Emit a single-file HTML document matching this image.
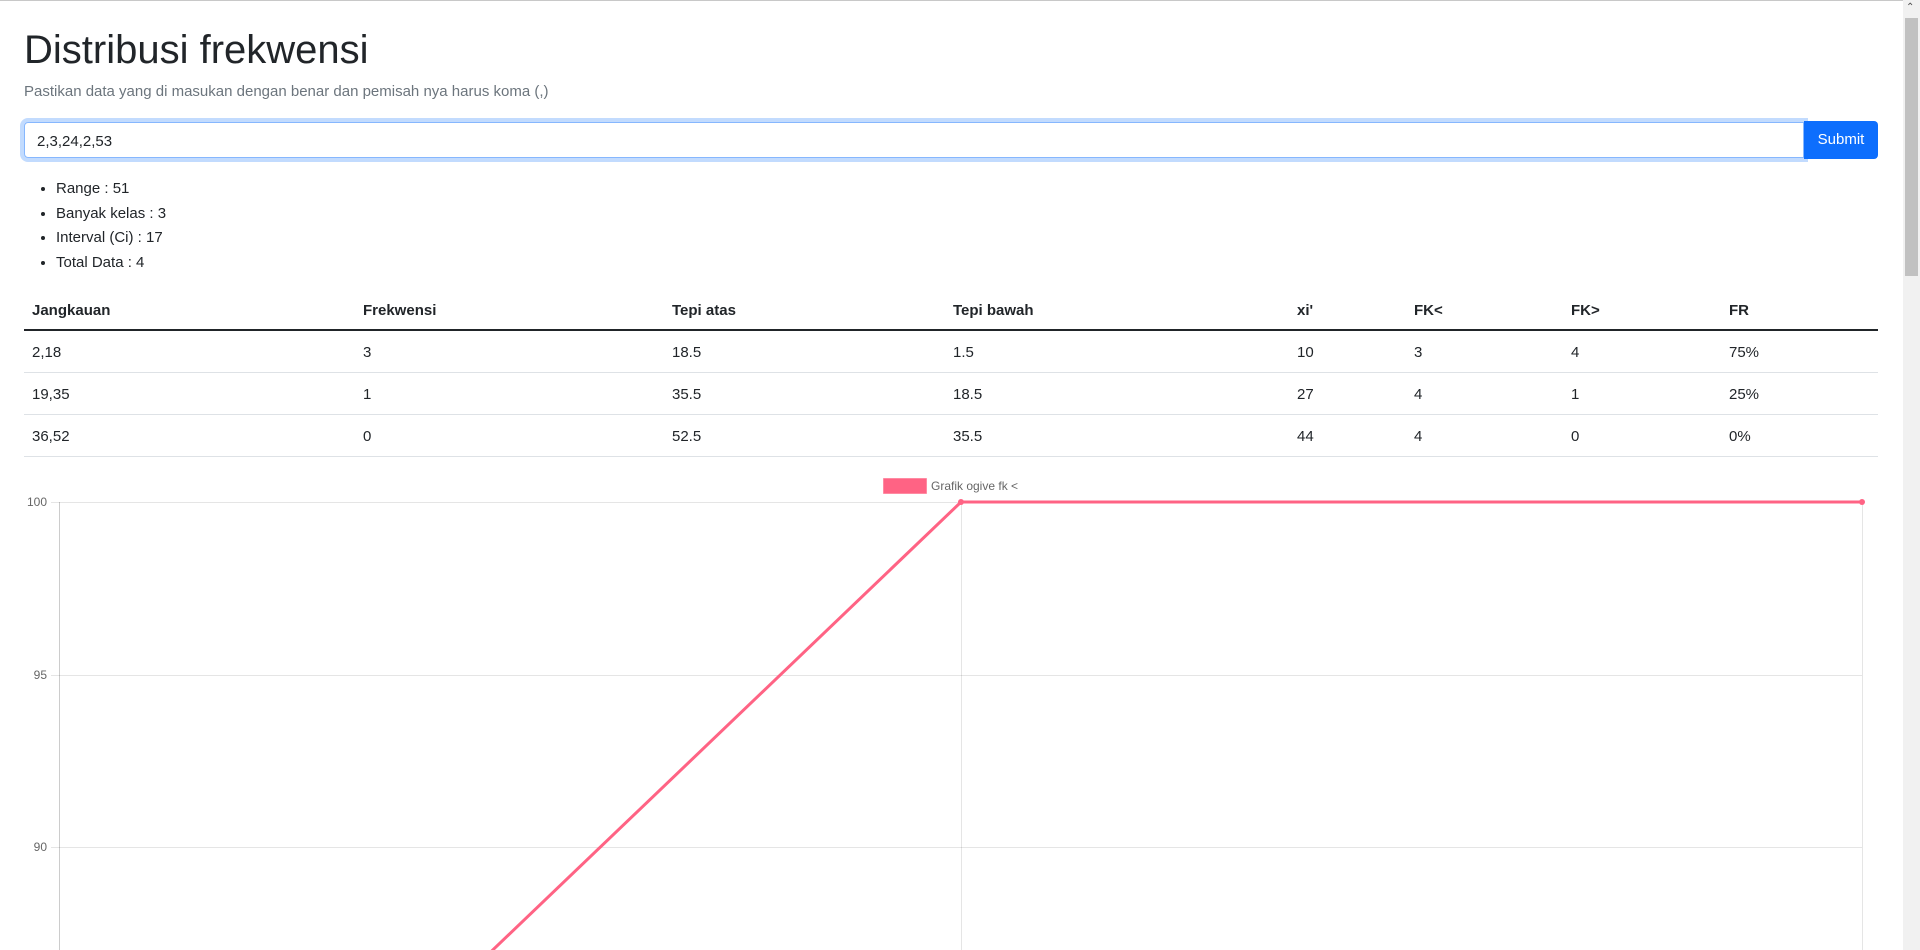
<!DOCTYPE html>
<html style="overflow:hidden"><head><meta charset="utf-8"><style>
html,body{margin:0;padding:0;}
body{width:1920px;height:950px;overflow:hidden;position:relative;background:#fff;font-family:"Liberation Sans",sans-serif;color:#212529;font-size:16px;}
.topline{position:absolute;left:0;top:0;width:1903px;height:1px;background:#c8c8c8;}
h1{position:absolute;left:24px;top:26px;margin:0;font-size:40px;font-weight:400;line-height:48px;}
.sub{position:absolute;left:24px;top:83px;color:#6c757d;font-size:15px;}
.inp{position:absolute;left:24px;top:122px;width:1766px;height:34px;border:1px solid #86b7fe;border-radius:4px 0 0 4px;box-shadow:0 0 0 4px rgba(13,110,253,.25);font-size:15px;line-height:37px;padding-left:12px;box-sizing:content-box;}
.btn{position:absolute;left:1804px;top:121px;width:74px;height:38px;background:#0d6efd;color:#fff;border-radius:0 4px 4px 0;font-size:15px;line-height:38px;text-align:center;z-index:2;}
ul{position:absolute;left:0;top:177px;margin:0;padding-left:56px;font-size:15px;line-height:24.5px;}
.tbl{position:absolute;left:24px;top:291px;width:1854px;font-size:15px;}
.row{position:relative;height:41px;border-bottom:1px solid #dee2e6;}
.row.h{height:38px;border-bottom:2px solid #212529;font-weight:bold;}
.row span{position:absolute;top:13px;}
.row.h span{top:11px;}
.sb{position:absolute;left:1903px;top:0;width:17px;height:950px;background:#f1f1f1;}
.thumb{position:absolute;left:1905px;top:18px;width:13px;height:258px;background:#c1c1c1;}
</style></head><body>
<div class="topline"></div>
<h1>Distribusi frekwensi</h1>
<div class="sub">Pastikan data yang di masukan dengan benar dan pemisah nya harus koma (,)</div>
<div class="inp">2,3,24,2,53</div>
<div class="btn">Submit</div>
<ul><li>Range : 51</li><li>Banyak kelas : 3</li><li>Interval (Ci) : 17</li><li>Total Data : 4</li></ul>
<div class="tbl">
<div class="row h"><span style="left:8px">Jangkauan</span><span style="left:339px">Frekwensi</span><span style="left:648px">Tepi atas</span><span style="left:929px">Tepi bawah</span><span style="left:1273px">xi'</span><span style="left:1390px">FK&lt;</span><span style="left:1547px">FK&gt;</span><span style="left:1705px">FR</span></div>
<div class="row"><span style="left:8px">2,18</span><span style="left:339px">3</span><span style="left:648px">18.5</span><span style="left:929px">1.5</span><span style="left:1273px">10</span><span style="left:1390px">3</span><span style="left:1547px">4</span><span style="left:1705px">75%</span></div>
<div class="row"><span style="left:8px">19,35</span><span style="left:339px">1</span><span style="left:648px">35.5</span><span style="left:929px">18.5</span><span style="left:1273px">27</span><span style="left:1390px">4</span><span style="left:1547px">1</span><span style="left:1705px">25%</span></div>
<div class="row"><span style="left:8px">36,52</span><span style="left:339px">0</span><span style="left:648px">52.5</span><span style="left:929px">35.5</span><span style="left:1273px">44</span><span style="left:1390px">4</span><span style="left:1547px">0</span><span style="left:1705px">0%</span></div>
</div>
<svg style="position:absolute;left:0;top:0" width="1903" height="950" font-family="Liberation Sans,sans-serif">
<rect x="883.5" y="478.5" width="43" height="15" fill="#ff6384" stroke="rgba(255,99,132,0.5)"/>
<text x="931" y="490" font-size="12" fill="#666">Grafik ogive fk &lt;</text>
<g stroke="rgba(0,0,0,0.1)" stroke-width="1">
<line x1="51" y1="502.5" x2="1862" y2="502.5"/>
<line x1="51" y1="675.5" x2="1862" y2="675.5"/>
<line x1="51" y1="847.5" x2="1862" y2="847.5"/>
<line x1="961.5" y1="502" x2="961.5" y2="950"/>
<line x1="1862.5" y1="502" x2="1862.5" y2="950"/>
</g>
<line x1="59.5" y1="502" x2="59.5" y2="950" stroke="rgba(0,0,0,0.2)"/>
<g font-size="12" fill="#666" text-anchor="end">
<text x="47" y="506">100</text><text x="47" y="679">95</text><text x="47" y="851">90</text>
</g>
<polyline points="59,1365 961,502 1862,502" fill="none" stroke="#ff6384" stroke-width="3"/>
<circle cx="961" cy="502" r="3" fill="#ff6384"/>
<circle cx="1862" cy="502" r="3" fill="#ff6384"/>
</svg>
<div class="sb"></div><div class="thumb"></div>
<div style="position:absolute;left:1906px;top:2px;font-size:10px;color:#505050">&#8963;</div>
</body></html>
